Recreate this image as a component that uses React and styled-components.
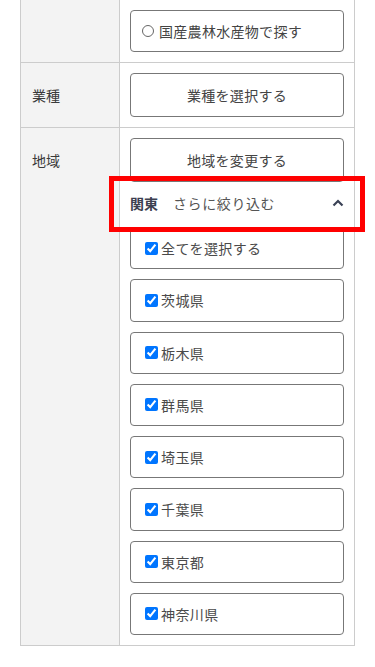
import React, { useState } from 'react';
import styled, { createGlobalStyle } from 'styled-components';

const GlobalStyle = createGlobalStyle`
  body {
    margin: 0;
    background: #fff;
    font-family: "Noto Sans CJK JP", "Noto Sans", sans-serif;
  }
`;

const Page = styled.div`
  padding: 0 20px;
`;

const Table = styled.div`
  border: solid 1px #cccccc;
  border-top: none;
`;

const Row = styled.div`
  display: grid;
  grid-template-columns: 99px 1fr;
  border-top: ${(p) => (p.first ? 'none' : 'solid 1px #cccccc')};
`;

const Label = styled.div`
  background-color: #f3f3f3;
  border-right: solid 1px #cccccc;
  color: #3a3a3a;
  font-size: 14px;
  line-height: 20px;
  padding: 22px 11px;
`;

const Cell = styled.div`
  padding: 10px;
  display: flex;
  flex-direction: column;
`;

const Button = styled.div`
  height: ${(p) => p.h || 44}px;
  box-sizing: border-box;
  border: solid 1px #777777;
  border-radius: 4px;
  display: flex;
  align-items: center;
  justify-content: ${(p) => (p.left ? 'flex-start' : 'center')};
  padding: 0 11px;
  color: #444444;
  font-size: 14px;
  letter-spacing: 0.3px;
`;

const Radio = styled.span`
  width: 10px;
  height: 10px;
  border: solid 1px #666666;
  border-radius: 50%;
  margin: 0 5px 0 0;
`;

const Header = styled.div`
  position: relative;
  height: 41px;
  display: flex;
  align-items: center;
  margin-bottom: 4px;
  padding-top: 1px;
  box-sizing: border-box;
  font-size: 14px;
  color: #555555;
  cursor: pointer;
`;

const Area = styled.strong`
  color: #3c4050;
  font-weight: bold;
  margin-right: 15px;
`;

const Narrow = styled.span`
  flex: 1;
  letter-spacing: 0.6px;
`;

const Mark = styled.div`
  position: absolute;
  top: -6px;
  left: -21px;
  right: -21px;
  bottom: -9px;
  border: solid 5px #ff0000;
  pointer-events: none;
`;

const List = styled.div`
  display: flex;
  flex-direction: column;
  gap: 10px;
`;

const Check = styled.label`
  height: 42.25px;
  box-sizing: border-box;
  border: solid 1px #777777;
  border-radius: 4px;
  display: flex;
  align-items: center;
  padding: 0 11px;
  color: #4a4a4a;
  font-size: 14px;
  letter-spacing: 0.4px;

  input {
    width: 13px;
    height: 13px;
    margin: 0 3px 0 3px;
  }
`;

const prefs = ['全てを選択する', '茨城県', '栃木県', '群馬県', '埼玉県', '千葉県', '東京都', '神奈川県'];

const Chevron = () => (
  <svg width="12" height="8" viewBox="0 0 12 8">
    <path d="M1.5 6.5 L6 2 L10.5 6.5" fill="none" stroke="#3b4256" strokeWidth="2.2" />
  </svg>
);

const App = () => {
  const [checked, setChecked] = useState(prefs.map(() => true));

  const toggle = (i) => {
    const next = [...checked];
    next[i] = !next[i];
    setChecked(next);
  };

  return (
    <Page>
      <GlobalStyle />
      <Table>
        <Row first>
          <Label />
          <Cell>
            <Button h={42} left>
              <Radio />
              国産農林水産物で探す
            </Button>
          </Cell>
        </Row>
        <Row>
          <Label>業種</Label>
          <Cell>
            <Button>業種を選択する</Button>
          </Cell>
        </Row>
        <Row>
          <Label>地域</Label>
          <Cell>
            <Button>地域を変更する</Button>
            <Header>
              <Area>関東</Area>
              <Narrow>さらに絞り込む</Narrow>
              <Chevron />
              <Mark />
            </Header>
            <List>
              {prefs.map((name, i) => (
                <Check key={name}>
                  <input type="checkbox" checked={checked[i]} onChange={() => toggle(i)} />
                  {name}
                </Check>
              ))}
            </List>
          </Cell>
        </Row>
      </Table>
    </Page>
  );
};

export default App;
